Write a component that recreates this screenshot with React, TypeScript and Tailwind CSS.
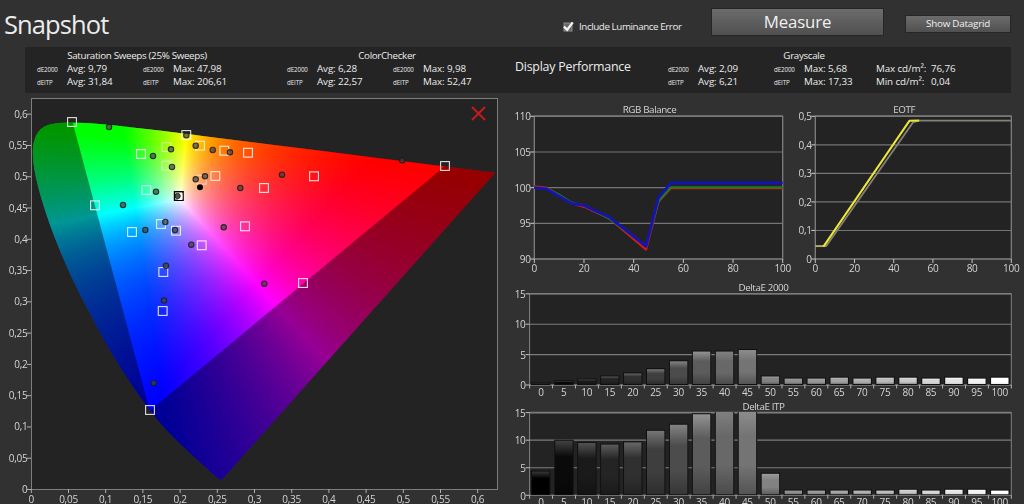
import { useLayoutEffect, useRef } from "react";

const LOCUS: [number, number][] = [
  [0.1741, 0.005], [0.1733, 0.0048], [0.1714, 0.0051], [0.1689, 0.0069], [0.1644, 0.0109],
  [0.1566, 0.0177], [0.144, 0.0297], [0.1355, 0.0399], [0.1241, 0.0578], [0.1096, 0.0868],
  [0.0913, 0.1327], [0.0687, 0.2007], [0.0454, 0.295], [0.0235, 0.4127], [0.0082, 0.5384],
  [0.0039, 0.6548], [0.0139, 0.7502], [0.0389, 0.812], [0.0743, 0.8338], [0.1142, 0.8262],
  [0.1547, 0.8059], [0.2296, 0.7543], [0.3016, 0.6923], [0.3731, 0.6245], [0.4441, 0.5547],
  [0.5125, 0.4866], [0.5752, 0.4242], [0.627, 0.3725], [0.6658, 0.334], [0.6915, 0.3083],
  [0.719, 0.2809], [0.7347, 0.2653],
];

const TOP = 94;
const CIE_W = 500;
const CIE_H = 410;
const ux = (u: number) => 31.3 + u * 744;
const vy = (v: number) => 489.5 - v * 625.5 - TOP;

function traceLocus(ctx: CanvasRenderingContext2D) {
  const pts = LOCUS.map(([x, y]) => {
    const d = -2 * x + 12 * y + 3;
    return [ux((4 * x) / d), vy((9 * y) / d)];
  });
  ctx.beginPath();
  ctx.moveTo(pts[0][0], pts[0][1]);
  for (let i = 1; i < pts.length - 1; i++) {
    const mx = (pts[i][0] + pts[i + 1][0]) / 2;
    const my = (pts[i][1] + pts[i + 1][1]) / 2;
    ctx.quadraticCurveTo(pts[i][0], pts[i][1], mx, my);
  }
  const last = pts[pts.length - 1];
  ctx.lineTo(last[0], last[1]);
  ctx.closePath();
}

function uvToRgb(u: number, v: number) {
  const X = (9 * u) / (4 * v);
  const Z = (12 - 3 * u - 20 * v) / (4 * v);
  return [
    3.2406 * X - 1.5372 - 0.4986 * Z,
    -0.9689 * X + 1.8758 + 0.0415 * Z,
    0.0557 * X - 0.204 + 1.057 * Z,
  ];
}

const WHITE = uvToRgb(0.2, 0.464);

function drawDiagram(ctx: CanvasRenderingContext2D) {
  const src = document.createElement("canvas");
  src.width = CIE_W;
  src.height = CIE_H;
  const sctx = src.getContext("2d")!;
  const img = sctx.createImageData(CIE_W, CIE_H);
  for (let py = 0; py < CIE_H; py++) {
    for (let px = 0; px < CIE_W; px++) {
      const u = (px + 0.5 - 31.3) / 744;
      const v = Math.max(0.002, (489.5 - TOP - py - 0.5) / 625.5);
      const rgb = uvToRgb(u, v).map((c, k) => Math.max(0, c / WHITE[k]));
      const m = Math.max(rgb[0], rgb[1], rgb[2], 1e-6);
      const i = (py * CIE_W + px) * 4;
      for (let k = 0; k < 3; k++) img.data[i + k] = Math.round((255 * rgb[k]) / m);
      img.data[i + 3] = 255;
    }
  }
  sctx.putImageData(img, 0, 0);

  ctx.clearRect(0, 0, CIE_W, CIE_H);
  ctx.save();
  traceLocus(ctx);
  ctx.clip();
  ctx.drawImage(src, 0, 0);
  ctx.fillStyle = "rgba(0,0,0,0.41)";
  ctx.fillRect(0, 0, CIE_W, CIE_H);
  ctx.beginPath();
  ctx.moveTo(ux(0.0556), vy(0.5868));
  ctx.lineTo(ux(0.11), vy(0.5868));
  ctx.lineTo(ux(0.21), vy(0.5735));
  ctx.lineTo(ux(0.5566), vy(0.5175));
  ctx.lineTo(ux(0.1593), vy(0.1258));
  ctx.closePath();
  ctx.clip();
  ctx.drawImage(src, 0, 0);
  ctx.restore();
}

const TARGETS: [number, number, number?][] = [
  [72, 122], [95, 205.3], [141, 154], [166.5, 147, 0.55], [166.5, 165.7, 0.55], [146.3, 190, 0.7],
  [186.3, 135], [200, 145.7, 0.75], [224.3, 150.7], [248, 152.7], [215.3, 176, 0.8],
  [201.7, 179.7, 0.5], [132, 232], [161, 224, 0.8], [176, 230.7], [201.7, 245.3], [245, 226.3],
  [163.3, 272], [445, 166], [314, 176.3], [264, 188], [303, 283], [162.7, 311], [150, 410],
];

const MEASURED: [number, number][] = [
  [109, 127], [153, 156], [171, 149.3], [172, 167], [186.3, 135.3], [195.7, 145.7], [212.7, 150],
  [230, 152.3], [205, 176.3], [195.7, 179.3], [240.3, 188], [156, 191.7], [123, 205],
  [165.3, 222], [175, 230], [145.3, 230], [191.3, 244.7], [223.7, 227.3], [166, 265.7],
  [164, 300.5], [402.3, 160.3], [282, 174.7], [264.3, 283.7], [153.7, 383],
];

const axisText = "fill-[#d4d4d4] font-['Open_Sans','Noto_Sans',sans-serif] text-[10px] tracking-[-0.25px]";
const titleText = "fill-[#d4d4d4] font-['Open_Sans','Noto_Sans',sans-serif] text-[9.8px] tracking-[-0.4px]";
const comma = (n: number) => String(Math.round(n * 100) / 100).replace(".", ",");

function Chromaticity() {
  const ref = useRef<HTMLCanvasElement>(null);
  useLayoutEffect(() => {
    const ctx = ref.current?.getContext("2d");
    if (ctx) drawDiagram(ctx);
  }, []);
  const ticks = Array.from({ length: 13 }, (_, i) => i * 0.05);
  return (
    <div className="grid h-[410px] w-[500px] shrink-0">
      <div className="col-start-1 row-start-1 mt-[4px] ml-[31px] h-[392px] w-[467px] border border-[#7e7e7e] bg-[#232323]" />
      <canvas ref={ref} width={CIE_W} height={CIE_H} className="col-start-1 row-start-1" />
      <svg className="col-start-1 row-start-1" width="500" height="410" viewBox="0 94 500 410">
        {ticks.map((t) => (
          <g key={t}>
            <path d={`M${31.3 + t * 744} 489V493M27 ${489.5 - t * 625.5}H31`} stroke="#b0b0b0" />
            <text className={axisText} x={31.3 + t * 744} y="503" textAnchor="middle">{comma(t)}</text>
            <text className={axisText} x="27.5" y={493 - t * 625.5} textAnchor="end">{comma(t)}</text>
          </g>
        ))}
        {TARGETS.map(([x, y, o], i) => (
          <rect key={i} x={x - 4.4} y={y - 4.4} width="8.8" height="8.8" fill="none" stroke="#fff" strokeOpacity={o ?? 0.85} strokeWidth="1.1" />
        ))}
        {MEASURED.map(([x, y], i) => (
          <circle key={i} cx={x} cy={y} r="2.7" fill="#404040" fillOpacity="0.7" stroke="#1c1c1c" strokeOpacity="0.85" strokeWidth="1.1" />
        ))}
        <circle cx="200" cy="187.3" r="3" fill="#000" />
        <rect x="174.5" y="191.7" width="8.6" height="8.6" fill="none" stroke="#000" strokeWidth="1.4" />
        <path d="M178 193.5h4v6h-4" fill="none" stroke="#fff" />
        <circle cx="177.6" cy="196" r="2.6" fill="#555" stroke="#222" />
        <path d="M472 107l13 13M485 107l-13 13" stroke="#c81a1a" strokeWidth="1.9" />
      </svg>
    </div>
  );
}

type Line = { points: [number, number][]; color: string; width: number };

function LineChart(props: {
  title: string; x: number; w: number; left: number; right: number;
  min: number; max: number; step: number; lines: Line[];
}) {
  const { title, x, w, left, right, min, max, step, lines } = props;
  const top = 116.3;
  const bottom = 259;
  const px = (v: number) => left + ((right - left) * v) / 100;
  const py = (v: number) => bottom - ((bottom - top) * (v - min)) / (max - min);
  const rows = Array.from({ length: Math.round((max - min) / step) + 1 }, (_, i) => min + i * step);
  return (
    <svg width={w} height="184" viewBox={`${x} 94 ${w} 184`} className="shrink-0">
      <rect x={left} y={top} width={right - left} height={bottom - top} fill="#232323" stroke="#858585" strokeWidth="1.2" />
      <path d={`M${left} ${top}H${right}`} stroke="#858585" strokeWidth="1.6" />
      {rows.map((r) => (
        <g key={r}>
          <path d={`M${left} ${py(r)}H${right}`} stroke="#757575" strokeWidth="1.1" />
          <path d={`M${left - 4} ${py(r)}H${left}`} stroke="#c0c0c0" strokeWidth="1.1" />
          <text className={axisText} x={left - 3.5} y={py(r) + 4} textAnchor="end">{comma(r)}</text>
        </g>
      ))}
      {[0, 20, 40, 60, 80, 100].map((t) => (
        <g key={t}>
          <path d={`M${px(t)} ${bottom}V${bottom + 4}`} stroke="#c0c0c0" />
          <text className={axisText} x={px(t)} y="272.3" textAnchor="middle">{t}</text>
        </g>
      ))}
      {lines.map((l, i) => (
        <polyline key={i} points={l.points.map(([a, b]) => `${px(a)},${py(b)}`).join(" ")} fill="none" stroke={l.color} strokeWidth={l.width} strokeLinejoin="round" />
      ))}
      <text className={titleText} x={(left + right) / 2 - 9} y="112.8" textAnchor="middle">{title}</text>
    </svg>
  );
}

const SHADES = [0, 10, 26, 36, 48, 62, 76, 92, 104, 116, 130, 142, 152, 162, 174, 186, 200, 214, 228, 242, 255];
const gray = (s: number) => `rgb(${s},${s},${s})`;

function BarChart(props: { id: string; title: string; y: number; h: number; top: number; bottom: number; values: number[] }) {
  const { id, title, y, h, top, bottom, values } = props;
  const unit = (bottom - top) / 15;
  const pitch = 22.94;
  const left = 529.6;
  return (
    <svg width="524" height={h} viewBox={`500 ${y} 524 ${h}`} className="block shrink-0">
      <defs>
        <clipPath id={`${id}-plot`}><rect x={left} y={top - 0.5} width="482" height={bottom - top + 0.5} /></clipPath>
        {SHADES.map((s, i) => (
          <linearGradient key={i} id={`${id}-${i}`} x1="0" x2="0" y1="0" y2="1">
            <stop offset="0" stopColor={gray(Math.min(255, s + (s < 100 ? 55 : 25)))} />
            <stop offset="0.3" stopColor={gray(s)} />
            <stop offset="0.65" stopColor={gray(s)} />
            <stop offset="1" stopColor={gray(Math.round(s * (s > 200 ? 0.92 : 0.72)))} />
          </linearGradient>
        ))}
      </defs>
      <rect x={left} y={top} width="481.7" height={bottom - top} fill="#232323" stroke="#808080" />
      {[0, 5, 10, 15].map((r) => (
        <g key={r}>
          <path d={`M${left} ${bottom - r * unit}H1011.3`} stroke="#7c7c7c" strokeWidth={r === 15 ? 1.6 : 1.1} />
          <path d={`M${left - 4} ${bottom - r * unit}H${left}`} stroke="#c0c0c0" />
          <text className={axisText} x={left - 4} y={bottom - r * unit + 4.2} textAnchor="end">{r}</text>
        </g>
      ))}
      <g clipPath={`url(#${id}-plot)`}>
        {values.map((v, i) => {
          const x = left + i * pitch + 2.4 + (i > 0 ? 0.3 : 0);
          const bh = v > 15 ? bottom - top + 2 : v * unit;
          return (
            <g key={i}>
              <rect x={x - 1} y={bottom - bh - 1} width="19.4" height={bh + 1} fill="#101010" />
              <rect x={x} y={bottom - bh} width="17.4" height={Math.max(0.6, bh - 1)} fill={`url(#${id}-${i})`} />
            </g>
          );
        })}
      </g>
      {Array.from({ length: 22 }, (_, i) => (
        <path key={i} d={`M${left + i * pitch} ${bottom}V${bottom + 3.5}`} stroke="#b0b0b0" />
      ))}
      {values.map((_, i) => (
        <text key={i} className={axisText} x={left + i * pitch + 11.3} y={bottom + 10.8} textAnchor="middle">{i * 5}</text>
      ))}
      <text className={titleText} x="763.5" y={top - 2.6} textAnchor="middle">{title}</text>
    </svg>
  );
}

function Stats({ title, shift = "pl-0", e2000, itp }: { title: string; shift?: string; e2000: [string, string]; itp: [string, string] }) {
  const small = "h-[13px] text-[6.2px] leading-[16px]";
  return (
    <div className="w-[200px] shrink-0 pt-[3px]">
      <div className={`${shift} h-[12px] text-center leading-[12px] tracking-[-0.33px]`}>{title}</div>
      <div className="grid auto-rows-[13px] grid-cols-[30px_76px_30px_64px] leading-[14px] whitespace-nowrap">
        <span className={small}>dE2000</span><span>Avg: {e2000[0]}</span>
        <span className={small}>dE2000</span><span>Max: {e2000[1]}</span>
        <span className={small}>dEITP</span><span>Avg: {itp[0]}</span>
        <span className={small}>dEITP</span><span>Max: {itp[1]}</span>
      </div>
    </div>
  );
}

const button = "flex items-center justify-center border border-[#262626] bg-linear-to-b from-[#6c6c6c] to-[#505050] text-[#f0f0f0]";

export default function App() {
  return (
    <div className="flex h-[504px] w-[1024px] flex-col overflow-hidden bg-[#313131] font-['Open_Sans','Noto_Sans',sans-serif] text-[9.8px] tracking-[-0.1px] text-[#ececec]">
      <header className="flex h-[47px] shrink-0 items-start">
        <h1 className="w-[562px] pt-[7px] pl-[4px] text-[25.5px] leading-[35px] tracking-[-0.9px]">Snapshot</h1>
        <label className="flex w-[149px] items-center gap-[4px] pt-[20px] leading-[13px] tracking-[-0.42px] whitespace-nowrap">
          <svg width="13" height="13" viewBox="0 0 13 13">
            <rect x="2" y="3" width="8" height="8" fill="#666" stroke="#909090" />
            <path d="M2 6.6l3.2 3.2L10.8 2.4" fill="none" stroke="#f4f4f4" strokeWidth="2.3" />
          </svg>
          Include Luminance Error
        </label>
        <button className={`${button} mt-[8px] h-[28px] w-[173px] text-[16.8px]`}>Measure</button>
        <button className={`${button} mt-[15px] ml-[21px] h-[18px] w-[106px] pt-px tracking-[-0.2px]`}>Show Datagrid</button>
      </header>
      <section className="ml-[25px] flex h-[46px] w-[986px] shrink-0 bg-[#242424] pl-[12px]">
        <Stats title="Saturation Sweeps (25% Sweeps)" e2000={["9,79", "47,98"]} itp={["31,84", "206,61"]} />
        <div className="w-[50px] shrink-0" />
        <Stats title="ColorChecker" e2000={["6,28", "9,98"]} itp={["22,57", "52,47"]} />
        <div className="w-[181px] shrink-0 pt-[11px] pl-[28px] text-[12.4px] leading-[18px] tracking-[-0.23px] whitespace-nowrap">Display Performance</div>
        <Stats title="Grayscale" shift="pl-[72px]" e2000={["2,09", "5,68"]} itp={["6,21", "17,33"]} />
        <div className="ml-[8px] grid auto-rows-[13px] grid-cols-[55px_40px] content-start pt-[15px] leading-[14px] whitespace-nowrap">
          <span>Max cd/m²:</span><span>76,76</span>
          <span>Min cd/m²:</span><span>0,04</span>
        </div>
      </section>
      <main className="mt-px flex h-[410px]">
        <Chromaticity />
        <div className="flex w-[524px] flex-col">
          <div className="flex">
            <LineChart
              title="RGB Balance" x={500} w={295} left={534.3} right={782.7} min={90} max={110} step={5}
              lines={[
                { color: "#d81818", width: 2, points: [[0, 100.2], [5, 100], [15, 97.8], [20, 97.3], [30, 95.7], [45, 91.3], [50, 98], [55, 99.9], [100, 99.9]] },
                { color: "#1f7a1f", width: 2.2, points: [[0, 100], [5, 99.9], [10, 99], [15, 97.9], [20, 97.5], [30, 95.7], [45, 91.8], [50, 98.1], [55, 100.05], [100, 100.05]] },
                { color: "#1414b4", width: 2.8, points: [[0, 100], [5, 99.8], [15, 97.8], [20, 97.5], [30, 95.9], [45, 91.8], [50, 98.6], [55, 100.65], [100, 100.65]] },
              ]}
            />
            <LineChart
              title="EOTF" x={795} w={229} left={815.3} right={1011.3} min={0} max={0.5} step={0.1}
              lines={[
                { color: "#858078", width: 1.8, points: [[0, 0.045], [5.5, 0.045], [50, 0.48], [53, 0.485], [100, 0.485]] },
                { color: "#b4b060", width: 1.8, points: [[0, 0.045], [5, 0.045]] },
                { color: "#ece834", width: 2, points: [[4, 0.045], [4.5, 0.047], [48, 0.484], [53, 0.485]] },
              ]}
            />
          </div>
          <BarChart id="de" title="DeltaE 2000" y={278} h={120} top={293.8} bottom={385}
            values={[0.25, 0.6, 0.9, 1.4, 1.9, 2.6, 3.9, 5.5, 5.5, 5.75, 1.4, 1.05, 1.05, 1.2, 1.05, 1.2, 1.2, 1.05, 1.2, 1.05, 1.2]} />
          <BarChart id="itp" title="DeltaE ITP" y={398} h={106} top={412.6} bottom={495.3}
            values={[4.3, 9.9, 9.5, 9.2, 9.6, 11.7, 12.8, 14.7, 16, 16, 3.9, 0.85, 0.85, 0.85, 0.85, 0.85, 1, 0.85, 1, 1, 0.85]} />
        </div>
      </main>
    </div>
  );
}
